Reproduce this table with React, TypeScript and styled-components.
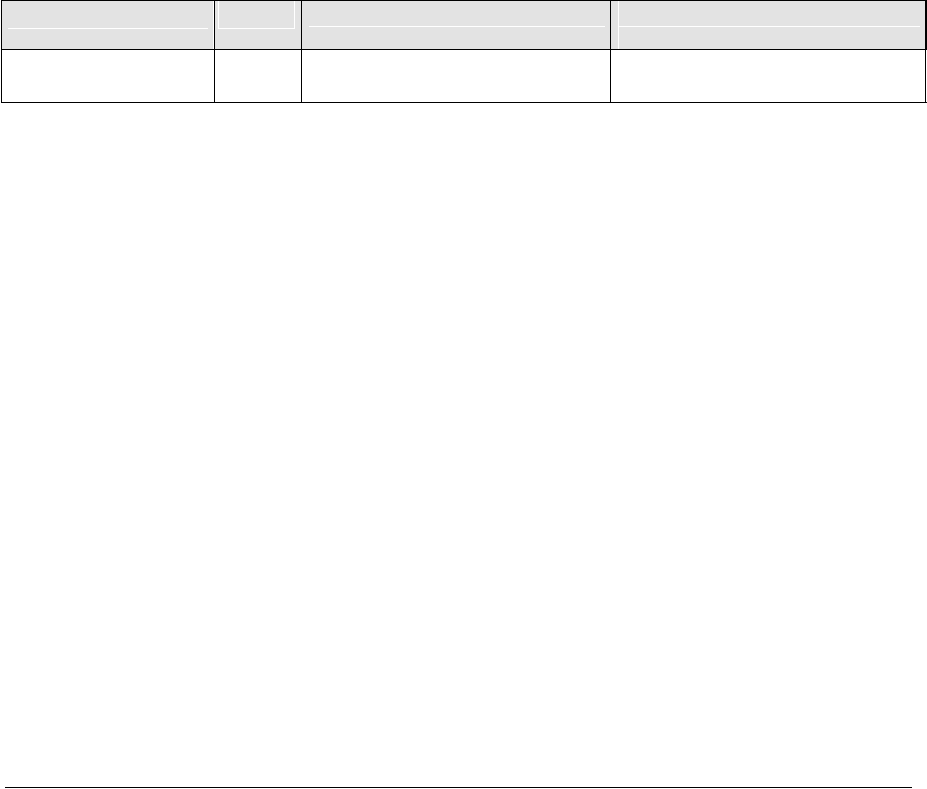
import React from "react";
import styled, { createGlobalStyle } from "styled-components";

const Global = createGlobalStyle`
  html, body { margin: 0; padding: 0; background: #fff; }
  body { font-family: "Liberation Serif", serif; }
`;

const Page = styled.div`
  display: flex;
  flex-direction: column;
  height: 100vh;
  box-sizing: border-box;
`;

const Table = styled.div`
  display: flex;
  flex-direction: column;
  margin-left: 1px;
  width: 926px;
`;

const HeaderRow = styled.div`
  display: flex;
  height: 48px;
  border-top: 1px solid #000;
  border-bottom: 1px solid #000;
  background: #e3e3e3;
`;

const BodyRow = styled.div`
  display: flex;
  height: 52px;
  border-bottom: 1px solid #000;
`;

const HeaderCell = styled.div<{ $w: number; $first?: boolean; $edge?: number; $light?: boolean }>`
  box-sizing: border-box;
  flex: none;
  display: flex;
  align-items: flex-start;
  width: ${(p) => p.$w}px;
  border-right: ${(p) => p.$edge ?? 1}px solid #000;
  border-left: ${(p) => (p.$first ? "1px solid #000" : "none")};
  box-shadow: ${(p) => (p.$light ? "inset -1px 0 0 #fff" : "none")};
`;

const BodyCell = styled.div<{ $w: number; $first?: boolean }>`
  box-sizing: border-box;
  flex: none;
  width: ${(p) => p.$w}px;
  border-right: 1px solid #000;
  border-left: ${(p) => (p.$first ? "1px solid #000" : "none")};
`;

const Groove = styled.div<{ $x: number; $w: number; $h: number; $sides?: boolean }>`
  box-sizing: content-box;
  flex: none;
  margin-left: ${(p) => p.$x}px;
  width: ${(p) => p.$w}px;
  height: ${(p) => p.$h}px;
  border-bottom: 1px solid #fff;
  border-left: ${(p) => (p.$sides ? "1px solid #fff" : "none")};
  border-right: ${(p) => (p.$sides ? "1px solid #fff" : "none")};
`;

const Stem = styled.div<{ $x: number }>`
  align-self: stretch;
  margin-left: ${(p) => p.$x}px;
  border-left: 1px solid #fff;
`;

const FooterRule = styled.div`
  margin-top: auto;
  margin-left: 5px;
  margin-bottom: 1px;
  width: 907px;
  border-top: 1px solid #000;
`;

export default function App() {
  return (
    <Page>
      <Global />
      <Table>
        <HeaderRow>
          <HeaderCell $w={214} $first $light>
            <Groove $x={6} $w={200} $h={27} />
          </HeaderCell>
          <HeaderCell $w={87}>
            <Groove $x={3} $w={75} $h={27} $sides />
          </HeaderCell>
          <HeaderCell $w={309}>
            <Groove $x={7} $w={296} $h={25} />
          </HeaderCell>
          <HeaderCell $w={316} $edge={2}>
            <Stem $x={7}>
              <Groove $x={0} $w={301} $h={25} />
            </Stem>
          </HeaderCell>
        </HeaderRow>
        <BodyRow>
          <BodyCell $w={214} $first />
          <BodyCell $w={87} />
          <BodyCell $w={309} />
          <BodyCell $w={315} />
        </BodyRow>
      </Table>
      <FooterRule />
    </Page>
  );
}
